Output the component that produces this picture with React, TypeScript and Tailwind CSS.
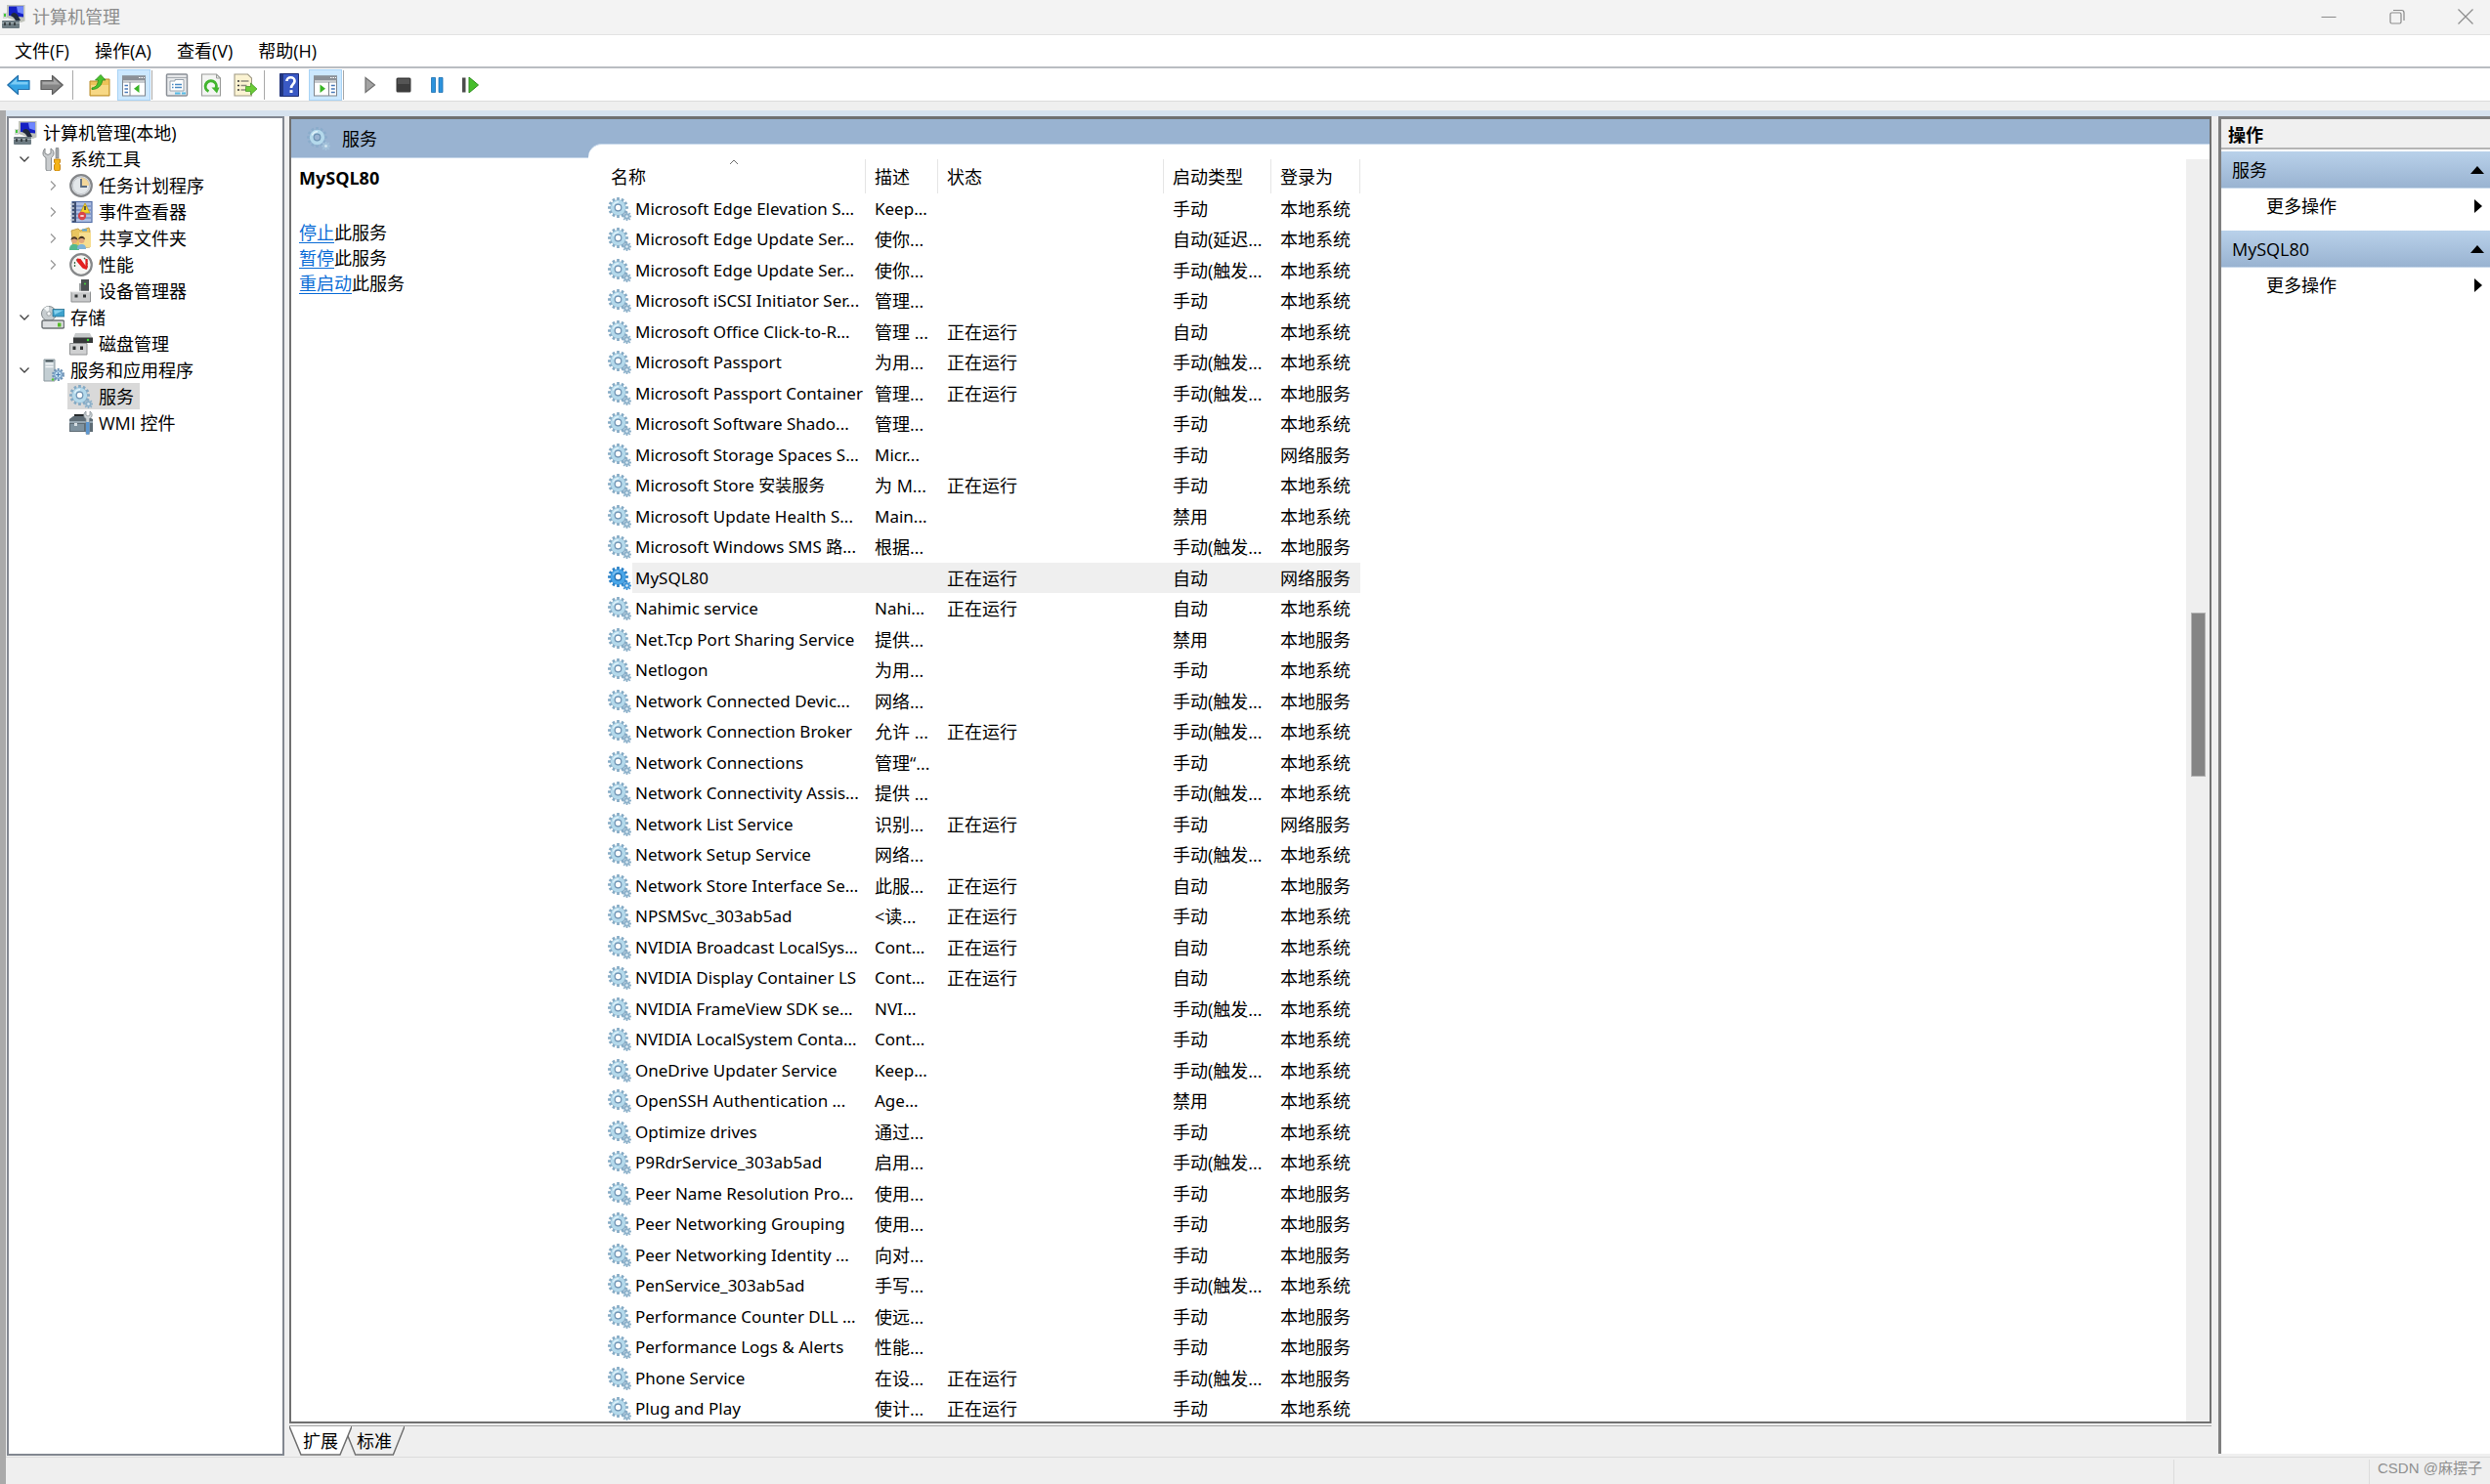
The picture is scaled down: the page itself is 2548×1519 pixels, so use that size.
import React, { useState } from "react";

type Service = [name: string, desc: string, status: string, startup: string, logon: string];

const RUN = "正在运行";
const MANUAL = "手动";
const AUTO = "自动";
const TRIGGER = "手动(触发...";
const DELAYED = "自动(延迟...";
const DISABLED = "禁用";
const SYS = "本地系统";
const LOC = "本地服务";
const NET = "网络服务";

const services: Service[] = [
  ["Microsoft Edge Elevation S...", "Keep...", "", MANUAL, SYS],
  ["Microsoft Edge Update Ser...", "使你...", "", DELAYED, SYS],
  ["Microsoft Edge Update Ser...", "使你...", "", TRIGGER, SYS],
  ["Microsoft iSCSI Initiator Ser...", "管理...", "", MANUAL, SYS],
  ["Microsoft Office Click-to-R...", "管理 ...", RUN, AUTO, SYS],
  ["Microsoft Passport", "为用...", RUN, TRIGGER, SYS],
  ["Microsoft Passport Container", "管理...", RUN, TRIGGER, LOC],
  ["Microsoft Software Shado...", "管理...", "", MANUAL, SYS],
  ["Microsoft Storage Spaces S...", "Micr...", "", MANUAL, NET],
  ["Microsoft Store 安装服务", "为 M...", RUN, MANUAL, SYS],
  ["Microsoft Update Health S...", "Main...", "", DISABLED, SYS],
  ["Microsoft Windows SMS 路...", "根据...", "", TRIGGER, LOC],
  ["MySQL80", "", RUN, AUTO, NET],
  ["Nahimic service", "Nahi...", RUN, AUTO, SYS],
  ["Net.Tcp Port Sharing Service", "提供...", "", DISABLED, LOC],
  ["Netlogon", "为用...", "", MANUAL, SYS],
  ["Network Connected Devic...", "网络...", "", TRIGGER, LOC],
  ["Network Connection Broker", "允许 ...", RUN, TRIGGER, SYS],
  ["Network Connections", "管理“...", "", MANUAL, SYS],
  ["Network Connectivity Assis...", "提供 ...", "", TRIGGER, SYS],
  ["Network List Service", "识别...", RUN, MANUAL, NET],
  ["Network Setup Service", "网络...", "", TRIGGER, SYS],
  ["Network Store Interface Se...", "此服...", RUN, AUTO, LOC],
  ["NPSMSvc_303ab5ad", "<读...", RUN, MANUAL, SYS],
  ["NVIDIA Broadcast LocalSys...", "Cont...", RUN, AUTO, SYS],
  ["NVIDIA Display Container LS", "Cont...", RUN, AUTO, SYS],
  ["NVIDIA FrameView SDK se...", "NVI...", "", TRIGGER, SYS],
  ["NVIDIA LocalSystem Conta...", "Cont...", "", MANUAL, SYS],
  ["OneDrive Updater Service", "Keep...", "", TRIGGER, SYS],
  ["OpenSSH Authentication ...", "Age...", "", DISABLED, SYS],
  ["Optimize drives", "通过...", "", MANUAL, SYS],
  ["P9RdrService_303ab5ad", "启用...", "", TRIGGER, SYS],
  ["Peer Name Resolution Pro...", "使用...", "", MANUAL, LOC],
  ["Peer Networking Grouping", "使用...", "", MANUAL, LOC],
  ["Peer Networking Identity ...", "向对...", "", MANUAL, LOC],
  ["PenService_303ab5ad", "手写...", "", TRIGGER, SYS],
  ["Performance Counter DLL ...", "使远...", "", MANUAL, LOC],
  ["Performance Logs & Alerts", "性能...", "", MANUAL, LOC],
  ["Phone Service", "在设...", RUN, TRIGGER, LOC],
  ["Plug and Play", "使计...", RUN, MANUAL, SYS],
];

/* ---------- icons ---------- */

function Icon({ children, className = "size-6" }: { children: React.ReactNode; className?: string }) {
  return (
    <svg viewBox="0 0 24 24" className={`${className} shrink-0`} aria-hidden="true">
      {children}
    </svg>
  );
}

function gearPath(cx: number, cy: number, outer: number, inner: number, teeth: number) {
  const step = (Math.PI * 2) / teeth;
  const pt = (r: number, a: number) => `${(cx + r * Math.cos(a)).toFixed(2)} ${(cy + r * Math.sin(a)).toFixed(2)}`;
  let d = "";
  for (let i = 0; i < teeth; i++) {
    const a = i * step;
    d += `${i ? "L" : "M"}${pt(inner, a - step * 0.32)}L${pt(outer, a - step * 0.24)}L${pt(outer, a + step * 0.24)}L${pt(inner, a + step * 0.32)}`;
  }
  return d + "Z";
}

const BIG_GEAR = gearPath(10.5, 10.5, 10.5, 8, 12);
const SMALL_GEAR = gearPath(19.5, 19.5, 4.8, 3.2, 8);

function GearIcon({ tone = "normal" }: { tone?: "normal" | "selected" | "pale" }) {
  const teeth = tone === "selected" ? "#2a80c6" : tone === "pale" ? "#8aaccb" : "#83a9c4";
  const ring = tone === "selected" ? "#4aa6e8" : "#b4d9eb";
  const small = tone === "selected" ? "#3f95d8" : tone === "pale" ? "#a3c2da" : "#8db1ca";
  const hole = tone === "pale" ? "#99b3d1" : "#ffffff";
  return (
    <Icon>
      <path d={BIG_GEAR} fill={teeth} />
      <circle cx="10.5" cy="10.5" r="5.700" fill="none" stroke={ring} strokeWidth="4" />
      <path d="M5.500 8.500a5.700 5.700 0 0 1 5.500-3.700" fill="none" stroke="#e6f5fc" strokeWidth="1.600" opacity={tone === "selected" ? 0.4 : 0.9} />
      <circle cx="10.5" cy="10.5" r="3.300" fill={hole} stroke={tone === "selected" ? "#1f6cae" : "#6f93b3"} strokeWidth="1.200" />
      <path d={SMALL_GEAR} fill={small} />
      <circle cx="19.500" cy="19.500" r="1.300" fill="#dcebf4" />
    </Icon>
  );
}

const ComputerIcon = () => (
  <Icon>
    <path d="M5 0h18.500v16.500l-4 1.500L5 13z" fill="#bfc2ba" />
    <path d="M7 1.500h15v11L7 11z" fill="#1520c4" />
    <path d="M15 1.500h7v8l-6-2z" fill="#6f86ff" />
    <path d="M9 11c1-4 6-4 8 1l2 4h-5l-2-3z" fill="#20293c" />
    <path d="M1 8h4v6H1z" fill="#d4d9d6" />
    <path d="M2 9h2v3H2z" fill="#45c83c" />
    <rect x="0" y="16" width="18" height="8" rx="1" fill="#6d7b82" />
    <path d="M0 18.500h18" stroke="#a8b4b8" strokeWidth="1" />
    <path d="M3 18v3M8 18v3M13 18v3" stroke="#2b3235" strokeWidth="1.600" />
  </Icon>
);

const ToolsIcon = () => (
  <Icon>
    <path d="M4 1v5l3 1.500L10 6V1c2 1 3 3 3 5s-1 3-2.500 4.500V22a2 2 0 0 1-2 2H7a2 2 0 0 1-2-2V10.500C3 9.500 2 8 2 6s1-4 2-5z" fill="#c9ccce" stroke="#85898c" strokeWidth="1" />
    <path d="M15.500 0h2l.500 2v9h-3V2z" fill="#a2a6a8" stroke="#777b7d" strokeWidth=".600" />
    <path d="M13.500 12h6v3l-1 1.500 1 1.500v4a2 2 0 0 1-2 2h-2a2 2 0 0 1-2-2v-4l1-1.500-1-1.500z" fill="#f5b417" stroke="#c47f0a" strokeWidth=".900" />
  </Icon>
);

const ClockIcon = () => (
  <Icon>
    <circle cx="12" cy="12" r="10.800" fill="#e3e7ea" stroke="#85878a" strokeWidth="2.200" />
    <path d="M12 12V3.500a8.500 8.500 0 0 1 8.500 8.500z" fill="#f3d79a" />
    <circle cx="12" cy="12" r="8.600" fill="none" stroke="#b9bdc1" strokeWidth=".800" />
    <path d="M12 5v8h6" fill="none" stroke="#5a6b80" strokeWidth="1.800" />
  </Icon>
);

const EventIcon = () => (
  <Icon>
    <rect x="3" y="1.500" width="20" height="21" fill="#aebfe2" stroke="#5470a8" strokeWidth="1.200" />
    <path d="M7 6h15M7 10h15M7 14h15M7 18h15" stroke="#5b78b6" strokeWidth="1.200" />
    <path d="M3 1.500h4v21H3z" fill="#3f4f71" />
    <path d="M1 4h4M1 8h4M1 12h4M1 16h4M1 20h4" stroke="#c8ced9" strokeWidth="1.500" />
    <path d="m16 3 5 10H11z" fill="#f6d32b" stroke="#b8950b" strokeWidth=".700" />
    <path d="M16 6v4" stroke="#333" strokeWidth="1.500" />
    <circle cx="13" cy="16" r="4.200" fill="#d8454b" />
    <path d="M11.300 16h3.400" stroke="#fff" strokeWidth="1.500" />
  </Icon>
);

const SharedIcon = () => (
  <Icon>
    <path d="M2 4 9 2l2 2 9-3 1 3v17L4 22z" fill="#e9c560" stroke="#b8923a" strokeWidth=".800" />
    <path d="M10 6h12v15H10z" fill="#f6dd8f" />
    <path d="M13 2.500h5v2h-5z" fill="#58a7dd" />
    <path d="M0 24c0-5 2-6 5-6s5 1 5 6z" fill="#55b98e" />
    <path d="M8 23c0-4 2-5 4.500-5s4.500 1 4.500 5z" fill="#7fb3d8" />
    <circle cx="5" cy="14" r="3" fill="#e1a87e" />
    <circle cx="12.500" cy="14" r="3" fill="#e1a87e" />
    <path d="M1.500 14c0-5 7-5 7 0-2-2-5-2-7 0zM9.200 13.500c0-5 6.800-5 6.800 0-2-2-5-2-6.800 0z" fill="#4a3524" />
  </Icon>
);

const PerfIcon = () => (
  <Icon>
    <circle cx="12" cy="12" r="10.800" fill="#f5f5f3" stroke="#86888a" strokeWidth="2.200" />
    <path d="M5.500 14V9M7 7.500 9 6M15 5l3 3v7" fill="none" stroke="#3d6a49" strokeWidth="1.300" strokeDasharray="2 1" />
    <path d="M8 5.500 11.500 6l7 9.500-1 1.500-4-1.500-6-7z" fill="#e31f20" />
    <path d="M17.500 6v9" stroke="#e31f20" strokeWidth="2.200" />
  </Icon>
);

const DeviceIcon = () => (
  <Icon>
    <path d="M12 0h8v12h-8z" fill="#4b4f50" />
    <path d="M10 4h2v8h-2z" fill="#9da1a2" />
    <circle cx="16" cy="4.500" r="1" fill="#45dd3a" />
    <path d="M2 12.500h19.500V23H2z" fill="#c9cacb" stroke="#8d8f90" strokeWidth="1" />
    <path d="M5.500 15.500h3v3h-3zM14 15.500h3v3h-3z" fill="#303334" />
    <path d="M2 12.500h19.500" stroke="#eee" strokeWidth="1.500" />
  </Icon>
);

const StorageIcon = () => (
  <Icon>
    <circle cx="8" cy="8" r="7.500" fill="#c7cdd0" stroke="#868d90" strokeWidth="1" />
    <path d="M8 8 3 2.500A7.500 7.500 0 0 1 8 .600z" fill="#f2f5f6" />
    <circle cx="8" cy="8" r="2.200" fill="#f7f9fa" stroke="#8c9294" strokeWidth=".800" />
    <path d="M12 3.500h12V11H12z" fill="#3ea2cd" stroke="#2b6d8c" strokeWidth=".800" />
    <path d="M13 4.500h10L14 9z" fill="#86d0ec" />
    <rect x="1" y="15" width="22.500" height="8" rx="1.500" fill="#dcdee0" stroke="#6e7376" strokeWidth="1.400" />
    <path d="M17 17.500h3.500v4H17z" fill="#55bc27" />
  </Icon>
);

const DiskIcon = () => (
  <Icon>
    <path d="m6 1 15 0 2.500 5H4z" fill="#c6c9ca" />
    <path d="M4 5.500h20V11H4z" fill="#37393a" />
    <circle cx="19" cy="8" r="1.200" fill="#3be034" />
    <path d="M0.500 11.500H18V23H.500z" fill="#cfd0d1" stroke="#919394" strokeWidth="1" />
    <path d="M3.500 14.500h3v3.500h-3zM11 14.500h3v3.500h-3z" fill="#303334" />
  </Icon>
);

const ServerIcon = () => (
  <Icon>
    <path d="M3 1h11v22H3z" fill="#c3ced3" stroke="#8b989e" strokeWidth="1" />
    <path d="M4.500 2.500h8" stroke="#2f3d42" strokeWidth="1.500" />
    <path d="M4.500 5.500h8M4.500 8.500h8" stroke="#f5f8f9" strokeWidth="1.500" />
    <circle cx="12" cy="21.500" r="1.200" fill="#53c832" />
    <circle cx="17.500" cy="16.500" r="5.200" fill="#b3d3ea" stroke="#7093b5" strokeWidth="2.500" strokeDasharray="2 1.300" />
    <circle cx="17.500" cy="16.500" r="3.800" fill="#c1def0" stroke="#6f9ac4" strokeWidth="1" />
    <path d="M17.500 14.300v4.400M15.300 16.500h4.400" stroke="#4d7db0" strokeWidth="1.200" />
  </Icon>
);

const WmiIcon = () => (
  <Icon>
    <path d="M6 7V4h9v3" fill="none" stroke="#25292b" strokeWidth="2" />
    <path d="M0 8 4 5h14l6 3v13H0z" fill="#5e6c75" />
    <path d="M0 11h24" stroke="#a9b9c4" strokeWidth="1.500" />
    <path d="M1 13h14v7H1z" fill="#7e929f" />
    <path d="M5 12h3v3H5z" fill="#d6dee3" />
    <path d="M17 0c-3 2-3 6 0 7.500v15a1.700 1.700 0 0 0 3.500 0v-15C24 6 24 2 21 0v4l-2 1-2-1z" fill="#cdd3d6" stroke="#80888c" strokeWidth=".700" />
    <path d="M17 11h3.500v11a1.700 1.700 0 0 1-3.500 0z" fill="#5d97d0" />
  </Icon>
);

const BackIcon = () => (
  <Icon>
    <path d="M0.800 12 11.500 2.500v5H23v9H11.500v5z" fill="#36a3e3" stroke="#2470ab" strokeWidth="1.200" strokeLinejoin="round" />
    <path d="M3.500 11.500 10 5.500V9h11.500v2.500z" fill="#7cccf5" />
  </Icon>
);
const ForwardIcon = () => (
  <Icon>
    <path d="M23.200 12 12.500 2.500v5H1v9h11.500v5z" fill="#858585" stroke="#5c5c5c" strokeWidth="1.200" strokeLinejoin="round" />
    <path d="M20.500 11.500 14 5.500V9H2.500v2.500z" fill="#a9a9a9" />
  </Icon>
);
const UpFolderIcon = () => (
  <Icon>
    <path d="M2 8h8l2-2h10v17H2z" fill="#edc35a" stroke="#b98c2c" strokeWidth="1" />
    <path d="M3 12h18v10H3z" fill="#f7d885" />
    <path d="M4 15c5-1 6-4 6.500-8H7.500L13 1.500 18 7h-3.200C14 13 10 16.500 4 16.500z" fill="#49c22d" stroke="#2c8c1c" strokeWidth=".800" />
  </Icon>
);
const PaneIcon = ({ side }: { side: "left" | "right" }) => (
  <Icon>
    <rect x="0.500" y="3" width="23" height="20" fill="#fff" stroke="#7e848b" strokeWidth="1" />
    <path d="M0 2.500h24v5H0z" fill="#8b9097" />
    <path d="M17 4.500h1.500M19.500 4.500H21M22 4.500h1" stroke="#fff" strokeWidth="1.200" />
    <path d="M1 9h22" stroke="#b6bbc1" strokeWidth="1.500" />
    {side === "left" ? (
      <g>
        <path d="M8 9v14" stroke="#7e848b" />
        <path d="M2.500 12.500h3.500M2.500 16h3.500M2.500 19.500h3.500" stroke="#4a7ab8" strokeWidth="1.600" />
        <path d="M17.500 11.500v8.500L12 15.700z" fill="#3ab526" />
      </g>
    ) : (
      <g>
        <path d="M15.500 9v14" stroke="#7e848b" />
        <path d="M17.800 12.500h4M17.800 16h4M17.800 19.500h4" stroke="#4a7ab8" strokeWidth="1.600" />
        <path d="M6.500 11.500v8.500l5.500-4.300z" fill="#3ab526" />
      </g>
    )}
  </Icon>
);
const PropsIcon = () => (
  <Icon>
    <rect x="1.500" y="1" width="21" height="22" rx="1" fill="#e9ebed" stroke="#8b9097" strokeWidth="1.500" />
    <path d="M2 4.500h20" stroke="#a9aeb4" strokeWidth="1.200" />
    <path d="M5 8h5V6.500h9V18H5z" fill="#fff" stroke="#9aa4ae" strokeWidth="1" />
    <path d="M7 11.500h1.500M7 14.500h1.500M10 11.500h7M10 14.500h7" stroke="#4d8bc4" strokeWidth="1.300" />
    <path d="M10 20.500h5.500M17 20.500h4" stroke="#53b9e6" strokeWidth="2" />
  </Icon>
);
const RefreshIcon = () => (
  <Icon>
    <path d="M2.500 1h15l4 4v18h-19z" fill="#f4f5f3" stroke="#9a9c99" strokeWidth="1.100" />
    <path d="M17.500 1v4h4" fill="none" stroke="#9a9c99" />
    <path d="M9.500 18.500A5.600 5.600 0 1 1 17 15.500" fill="none" stroke="#43b52f" strokeWidth="3" />
    <path d="M12.500 14.500h8l-2.500 6z" fill="#43b52f" />
  </Icon>
);
const ExportIcon = () => (
  <Icon>
    <path d="M1 1h13.500l4 4v18H1z" fill="#fbf3d2" stroke="#a09a84" strokeWidth="1.100" />
    <path d="M4 8h2M4 12.500h2M4 17h2" stroke="#333" strokeWidth="1.700" />
    <path d="M7.500 8h8M7.500 12.500h6M7.500 17h6" stroke="#8d8a7c" strokeWidth="1.300" />
    <path d="M12.500 13.500h5v-3.500l6.500 6-6.500 6v-3.500h-5z" fill="#6bcb36" stroke="#3c9420" strokeWidth=".700" />
  </Icon>
);
const HelpIcon = () => (
  <Icon>
    <path d="M2.500.500h19v23h-19z" fill="#3a59c4" stroke="#1c2c74" strokeWidth="1" />
    <path d="M2.500.500h3.500v23H2.500z" fill="#22367f" />
    <path d="M9.500 8c0-5 8-5 8 0 0 3-3.500 3.300-3.500 7" fill="none" stroke="#fff" strokeWidth="2.700" />
    <path d="M12.500 17.200h3V20h-3z" fill="#fff" />
  </Icon>
);
const PlayIcon = () => (
  <Icon>
    <path d="M7 4.500v15l9.500-7.500z" fill="#a3a3a3" stroke="#707070" strokeWidth="1.200" />
  </Icon>
);
const StopIcon = () => (
  <Icon>
    <rect x="4.500" y="4.500" width="15" height="15" rx="1.500" fill="#3d3d3d" />
    <path d="M6 6h12v5H6z" fill="#555" />
  </Icon>
);
const PauseIcon = () => (
  <Icon>
    <path d="M6.500 4.500H10.500v15H6.500zM14 4.500H18v15h-4z" fill="#2b92dc" stroke="#1c6eb0" strokeWidth=".800" />
  </Icon>
);
const RestartIcon = () => (
  <Icon>
    <path d="M4 4.500h3.500v15H4z" fill="#4c4c4c" />
    <path d="M11 4v16l9.500-8z" fill="#46be2c" stroke="#2c8d1b" strokeWidth="1" />
  </Icon>
);

/* ---------- chrome ---------- */

function TitleBar() {
  return (
    <header className="flex h-9 shrink-0 items-start border-b border-[#e3e3e3] bg-[#f3f3f3] pt-[5px] pl-0.5 text-[#8b8b8b]">
      <ComputerIcon />
      <h1 className="ml-[7px]">计算机管理</h1>
      <div className="ml-auto flex">
        <button aria-label="最小化" className="flex h-6 w-[70px] items-center justify-center">
          <svg viewBox="0 0 16 16" className="size-4" fill="none" stroke="#8b8b8b"><path d="M0.500 8.500h15" /></svg>
        </button>
        <button aria-label="向下还原" className="flex h-6 w-[70px] items-center justify-center">
          <svg viewBox="0 0 16 16" className="size-4" fill="none" stroke="#8b8b8b" strokeWidth="1.200">
            <rect x="1" y="4" width="11" height="11" rx="1.500" />
            <path d="M4 1.500h8.500a2.500 2.500 0 0 1 2.500 2.500v8" />
          </svg>
        </button>
        <button aria-label="关闭" className="-mr-2.5 flex h-6 w-[70px] items-center justify-center">
          <svg viewBox="0 0 16 16" className="size-4" fill="none" stroke="#8b8b8b" strokeWidth="1.200"><path d="m.500.500 15 15M15.500.500l-15 15" /></svg>
        </button>
      </div>
    </header>
  );
}

function MenuBar() {
  return (
    <nav className="flex h-[34px] shrink-0 items-center gap-[26px] border-b-2 border-[#b9bdc1] bg-white pl-[15px]">
      {["文件(F)", "操作(A)", "查看(V)", "帮助(H)"].map((m) => (
        <button key={m} className="whitespace-nowrap">{m}</button>
      ))}
    </nav>
  );
}

function Tool({ label, active, children }: { label: string; active?: boolean; children: React.ReactNode }) {
  return (
    <button
      aria-label={label}
      className={`flex h-8 w-[34px] items-center justify-center ${active ? "border border-[#a9d3f5] bg-[#cce8ff]" : ""}`}
    >
      {children}
    </button>
  );
}

const Sep = () => <div className="h-[30px] w-px bg-[#a9a9a9]" />;

function Toolbar() {
  return (
    <div className="flex h-[34px] shrink-0 items-center border-b border-[#dcdcdc] bg-white pl-0.5">
      <Tool label="后退"><BackIcon /></Tool>
      <Tool label="前进"><ForwardIcon /></Tool>
      <div className="pl-1"><Sep /></div>
      <div className="flex items-center gap-px pr-px pl-2.5">
        <Tool label="向上一级"><UpFolderIcon /></Tool>
        <Tool label="显示/隐藏控制台树" active><PaneIcon side="left" /></Tool>
      </div>
      <Sep />
      <div className="flex items-center gap-px pr-0.5 pl-2">
        <Tool label="属性"><PropsIcon /></Tool>
        <Tool label="刷新"><RefreshIcon /></Tool>
        <Tool label="导出列表"><ExportIcon /></Tool>
      </div>
      <Sep />
      <div className="flex items-center gap-[3px] pr-px pl-2">
        <Tool label="帮助"><HelpIcon /></Tool>
        <Tool label="显示/隐藏操作窗格" active><PaneIcon side="right" /></Tool>
      </div>
      <Sep />
      <div className="flex items-center pl-2.5">
        <Tool label="启动服务"><PlayIcon /></Tool>
        <Tool label="停止服务"><StopIcon /></Tool>
        <Tool label="暂停服务"><PauseIcon /></Tool>
        <Tool label="重新启动服务"><RestartIcon /></Tool>
      </div>
    </div>
  );
}

/* ---------- tree ---------- */

function Chevron({ open }: { open: boolean }) {
  return (
    <svg viewBox="0 0 12 12" className="size-3" fill="none" stroke={open ? "#404040" : "#9a9a9a"} strokeWidth="1.300">
      {open ? <path d="m1.500 3.500 4.500 4.500 4.500-4.500" /> : <path d="m4 1.500 4.500 4.500L4 10.500" />}
    </svg>
  );
}

function TreeRow({ level, open, icon, label, selected }: {
  level: 0 | 1 | 2;
  open?: boolean;
  icon: React.ReactNode;
  label: string;
  selected?: boolean;
}) {
  const indent = level === 0 ? "pl-0.5" : level === 1 ? "pl-0.5" : "pl-[31px]";
  return (
    <li className={`flex h-[27px] items-center ${indent}`}>
      {level > 0 && (
        <span className="flex w-[27px] pl-0.5">
          {open !== undefined && (
            <button aria-label={open ? "折叠" : "展开"} className="flex size-5 items-center justify-center">
              <Chevron open={open} />
            </button>
          )}
        </span>
      )}
      <button className={`flex h-full items-center gap-1.5 pr-1.5 whitespace-nowrap ${level === 0 ? "pl-px" : "pl-0.5"} ${selected ? "bg-[#d9d9d9]" : ""}`}>
        {icon}
        {label}
      </button>
    </li>
  );
}

function Tree() {
  return (
    <aside className="w-[284px] shrink-0 border-2 border-[#828790] bg-white">
      <ul className="pt-px pl-0.5">
        <TreeRow level={0} icon={<ComputerIcon />} label="计算机管理(本地)" />
        <TreeRow level={1} open icon={<ToolsIcon />} label="系统工具" />
        <TreeRow level={2} open={false} icon={<ClockIcon />} label="任务计划程序" />
        <TreeRow level={2} open={false} icon={<EventIcon />} label="事件查看器" />
        <TreeRow level={2} open={false} icon={<SharedIcon />} label="共享文件夹" />
        <TreeRow level={2} open={false} icon={<PerfIcon />} label="性能" />
        <TreeRow level={2} icon={<DeviceIcon />} label="设备管理器" />
        <TreeRow level={1} open icon={<StorageIcon />} label="存储" />
        <TreeRow level={2} icon={<DiskIcon />} label="磁盘管理" />
        <TreeRow level={1} open icon={<ServerIcon />} label="服务和应用程序" />
        <TreeRow level={2} icon={<GearIcon />} label="服务" selected />
        <TreeRow level={2} icon={<WmiIcon />} label="WMI 控件" />
      </ul>
    </aside>
  );
}

/* ---------- services ---------- */

function ServiceTable({ selected, onSelect }: { selected: string; onSelect: (name: string) => void }) {
  const head = "border-r border-[#e5e5e5] p-0 text-left font-normal";
  const cell = "p-0 pl-[9px]";
  const latin = "font-['Noto_Sans','Noto_Sans_CJK_SC',sans-serif] text-[17px]";
  return (
    <table className="w-[772px] shrink-0 table-fixed border-separate border-spacing-0 self-start whitespace-nowrap">
      <colgroup>
        <col className="w-[266px]" />
        <col className="w-[74px]" />
        <col className="w-[231px]" />
        <col className="w-[110px]" />
        <col className="w-[91px]" />
      </colgroup>
      <thead>
        <tr className="h-[35px]">
          <th className={`${head} relative pl-[5px]`} aria-sort="ascending">
            名称
            <svg viewBox="0 0 10 6" className="absolute top-0 left-[126px] h-1.5 w-2.5" fill="none" stroke="#707070"><path d="m1 5 4-4 4 4" /></svg>
          </th>
          <th className={`${head} pl-[9px]`}>描述</th>
          <th className={`${head} pl-[9px]`}>状态</th>
          <th className={`${head} pl-[9px]`}>启动类型</th>
          <th className={`${head} pl-[9px]`}>登录为</th>
        </tr>
      </thead>
      <tbody>
        {services.map(([name, desc, status, startup, logon], i) => {
          const on = name === selected;
          const bg = on ? "bg-[#efefef]" : "";
          return (
            <tr key={i} className="leading-6 odd:h-[31px] even:h-8" onClick={() => onSelect(name)}>
              <td className={`p-0 pl-[2px] ${on ? "bg-[linear-gradient(90deg,#fff_27px,#efefef_27px)]" : ""}`}>
                <div className="flex items-center gap-1">
                  <GearIcon tone={on ? "selected" : "normal"} />
                  <span className={latin}>{name}</span>
                </div>
              </td>
              <td className={`${cell} ${bg} ${/^[A-Z]/.test(desc) ? latin : ""}`}>{desc}</td>
              <td className={`${cell} ${bg}`}>{status}</td>
              <td className={`${cell} ${bg}`}>{startup}</td>
              <td className={`${cell} ${bg}`}>{logon}</td>
            </tr>
          );
        })}
      </tbody>
    </table>
  );
}

function TaskLink({ verb }: { verb: string }) {
  return (
    <p>
      <a href="#" className="text-[#0a6cd6] underline underline-offset-3">{verb}</a>此服务
    </p>
  );
}

function Tab({ label, active }: { label: string; active?: boolean }) {
  return (
    <button role="tab" aria-selected={!!active} className={`relative h-[30px] ${active ? "z-10 w-16" : "-ml-2 w-[62px]"}`}>
      <svg viewBox="0 0 64 30" preserveAspectRatio="none" className="absolute inset-0 size-full" aria-hidden="true">
        <path d="M0 0 12 29H52L64 0" fill={active ? "#fff" : "#f0f0f0"} stroke="#707070" strokeWidth="1.500" />
      </svg>
      <span className="relative">{label}</span>
    </button>
  );
}

function ServicesPane() {
  const [selected, setSelected] = useState("MySQL80");
  return (
    <main className="flex min-w-0 flex-1 flex-col">
      <div className="flex min-h-0 flex-1 border-t-3 border-r-2 border-b-2 border-l-2 border-[#707070] bg-[#99b3d1]">
        <section className="flex w-[304px] shrink-0 flex-col">
          <h2 className="flex h-10 shrink-0 items-center gap-3 border-b border-[#c5d7ea] pl-4">
            <GearIcon tone="pale" />
            服务
          </h2>
          <div className="flex-1 bg-white pt-[7px] pl-2 leading-[26px]">
            <h3 className="font-bold">{selected}</h3>
            <div className="mt-[30px]">
              <TaskLink verb="停止" />
              <TaskLink verb="暂停" />
              <TaskLink verb="重启动" />
            </div>
          </div>
        </section>
        <section className="mt-[25px] flex min-w-0 flex-1 overflow-hidden rounded-tl-[14px] border-t border-[#c5d7ea] bg-white pt-[15px] pl-[18px]">
          <ServiceTable selected={selected} onSelect={setSelected} />
          <div className="ml-auto w-6 shrink-0 bg-[#efefef] pt-[464px]">
            <div className="mx-auto h-[168px] w-[15px] border border-[#b5b5b5] bg-[#858585]" />
          </div>
        </section>
      </div>
      <div className="mt-0.5 flex h-[31px] shrink-0 border-t border-[#a5a5a5]" role="tablist">
        <Tab label="扩展" active />
        <Tab label="标准" />
      </div>
    </main>
  );
}

/* ---------- actions ---------- */

function ActionGroup({ title }: { title: string }) {
  return (
    <section>
      <button className="flex h-[38px] w-full items-center justify-between border-b border-[#c5d7ea] bg-linear-to-b from-[#b9d1ea] to-[#99b3d1] pr-1.5 pl-[11px]">
        {title}
        <svg viewBox="0 0 14 8" className="h-2 w-3.5"><path d="M0 8 7 0l7 8z" /></svg>
      </button>
      <button className="mb-[7px] flex h-9 w-full items-center justify-between pr-2 pl-[46px]">
        更多操作
        <svg viewBox="0 0 8 14" className="h-3.5 w-2"><path d="m0 0 8 7-8 7z" /></svg>
      </button>
    </section>
  );
}

function ActionsPane() {
  return (
    <aside className="mb-0.5 ml-0.5 w-[278px] shrink-0 border-t-3 border-l-3 border-[#7f7f7f] bg-white">
      <h2 className="mb-0.5 flex h-[31px] items-center border-b-2 border-[#b4b4b4] bg-[#f0f0f0] pt-0.5 pl-[7px] font-bold">操作</h2>
      <ActionGroup title="服务" />
      <ActionGroup title="MySQL80" />
    </aside>
  );
}

export default function App() {
  return (
    <div className="flex h-screen flex-col overflow-hidden bg-[#efefef] font-['Open_Sans','Noto_Sans_CJK_SC',sans-serif] text-lg leading-6 text-black">
      <TitleBar />
      <MenuBar />
      <Toolbar />
      <div className="h-[9px] shrink-0" />
      <div className="flex min-h-0 flex-1 border-l-6 border-[#aaaaaa]">
        <div className="flex min-w-0 flex-1 flex-col">
          <div className="h-1.5 shrink-0 bg-[#d6e2ee]" />
          <div className="flex min-h-0 flex-1">
            <div className="flex min-w-0 flex-1 gap-[5px] pb-px pl-px">
              <Tree />
              <ServicesPane />
              <ActionsPane />
            </div>
          </div>
          <footer className="flex h-7 shrink-0 justify-end border-t border-[#dcdcdc]">
            <div className="mt-0.5 w-[200px] border-l border-[#dcdcdc]" />
            <div className="mt-0.5 w-[124px] border-l border-[#dcdcdc] pl-2 font-['Liberation_Sans','Noto_Sans_CJK_SC',sans-serif] text-[15px] leading-[18px] whitespace-nowrap text-[#8f8f8f]">
              CSDN @麻摆子
            </div>
          </footer>
        </div>
      </div>
    </div>
  );
}
